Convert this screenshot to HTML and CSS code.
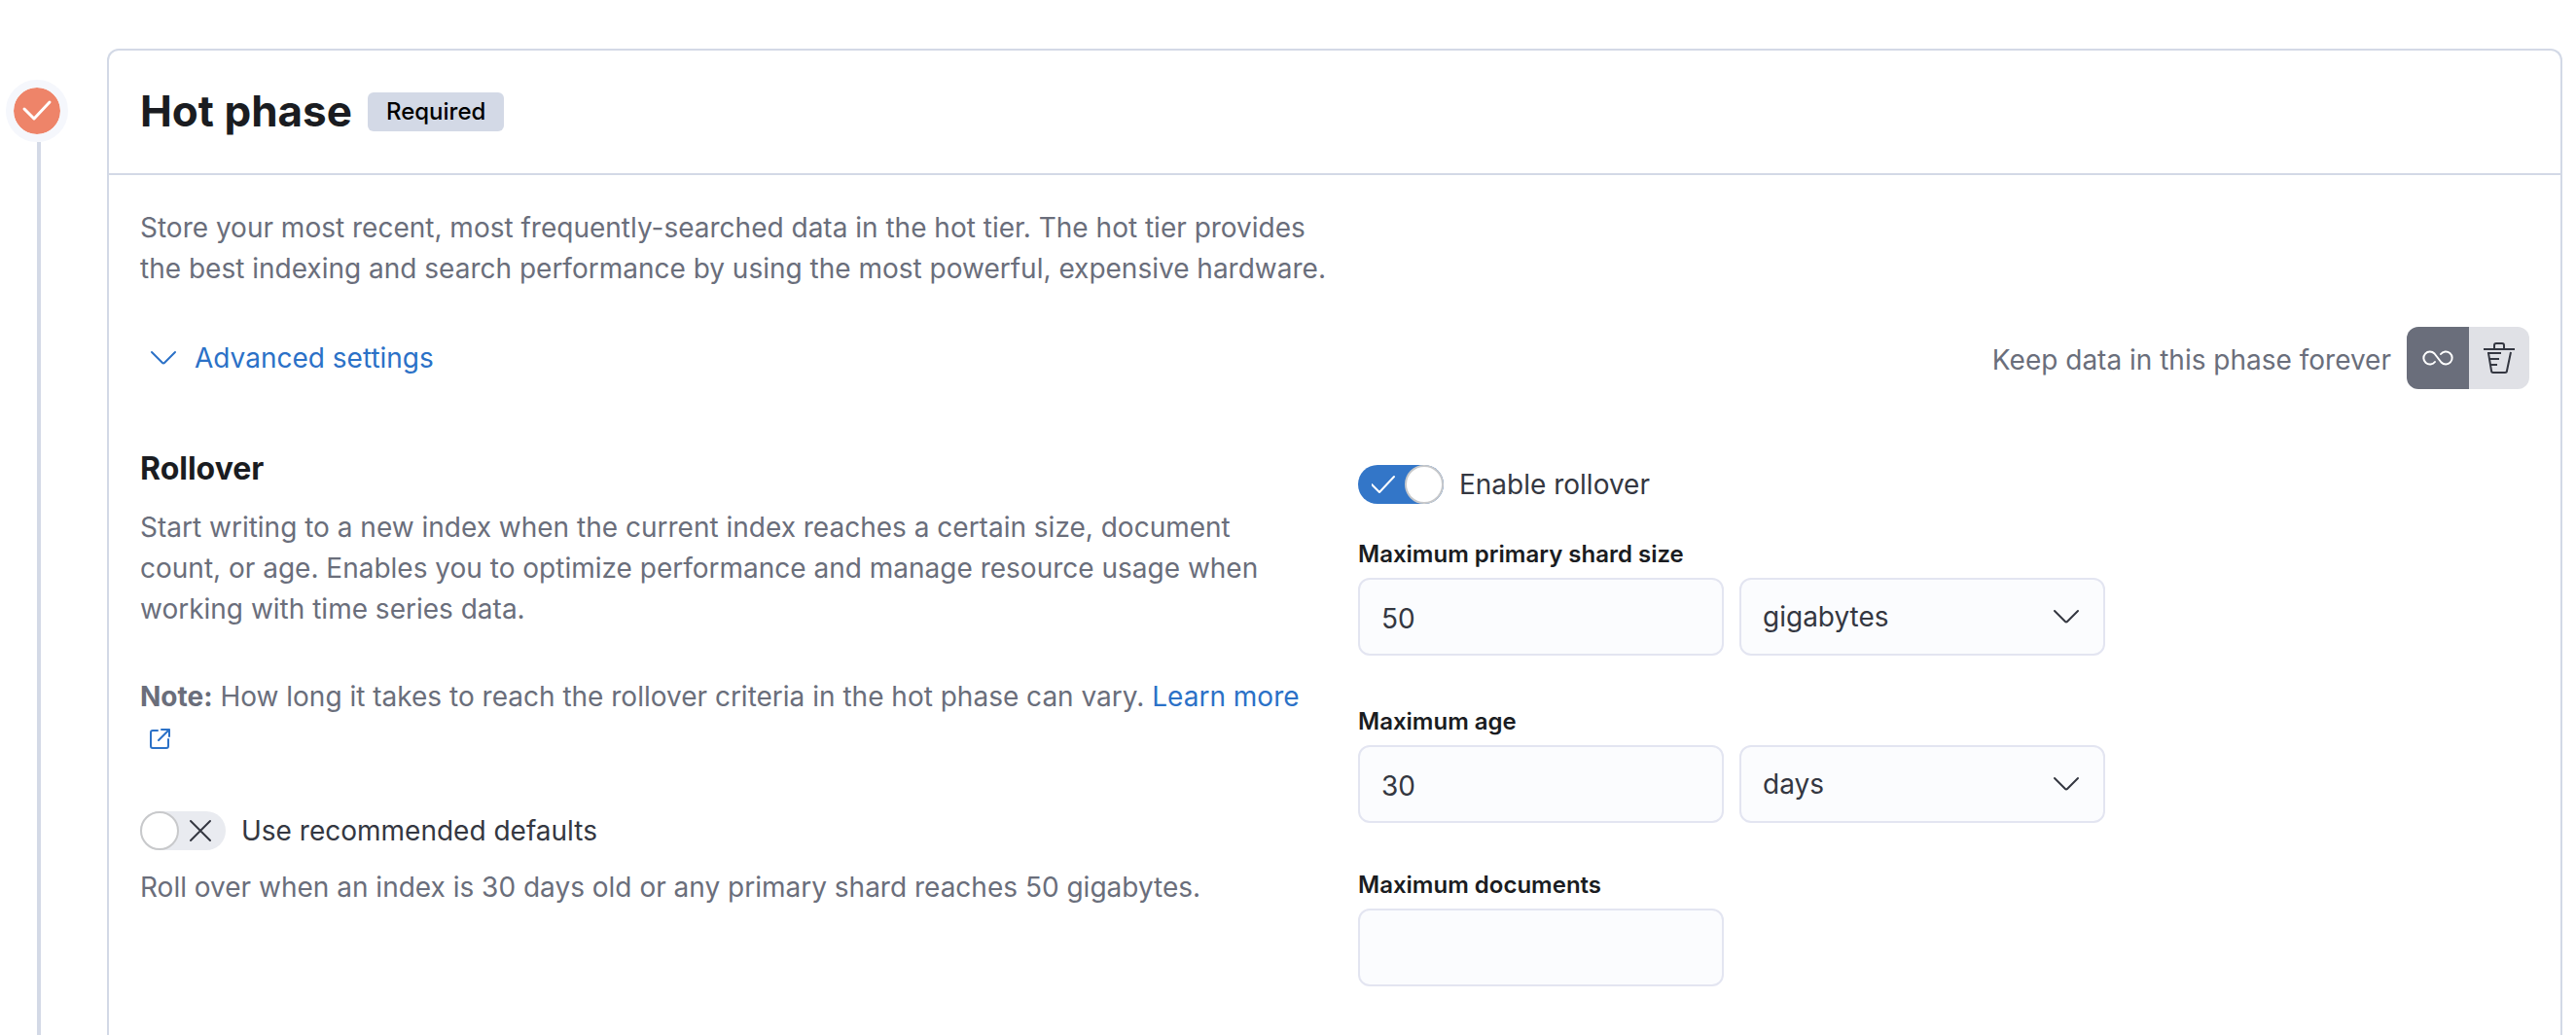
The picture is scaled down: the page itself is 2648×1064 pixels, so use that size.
FILE: index.html
```html
<!DOCTYPE html>
<html lang="en">
<head>
<meta charset="utf-8">
<title>Index lifecycle policy</title>
<link rel="stylesheet" href="styles.css">
</head>
<body>
<main class="phase">
  <div class="timeline">
    <div class="timeline-dot">
      <svg class="icon-lg" viewBox="0 0 32 32" aria-hidden="true"><path d="M3 14l10 10L29 7" stroke-width="3"/></svg>
    </div>
    <div class="timeline-line"></div>
  </div>
  <section class="panel">
    <header class="panel-header">
      <h1 class="title">Hot phase</h1>
      <span class="badge">Required</span>
    </header>
    <div class="panel-body">
      <p class="text intro">Store your most recent, most frequently-searched data in the hot tier. The hot tier provides the best indexing and search performance by using the most powerful, expensive hardware.</p>
      <div class="toolbar">
        <button class="advanced" type="button">
          <svg class="icon-lg" viewBox="0 0 32 32" aria-hidden="true"><path d="M4 10l11 11q1 1 2 0L28 10"/></svg>
          Advanced settings
        </button>
        <div class="retention">
          <span class="text retention-text">Keep data in this phase forever</span>
          <div class="button-group">
            <button class="group-button selected" type="button" aria-label="Keep data forever">
              <svg class="icon-lg" viewBox="0 0 32 32" aria-hidden="true"><path d="M13 20A6.500 6.500 0 1 1 12.500 11.500L19.500 20.500A6.500 6.500 0 1 0 19 12"/></svg>
            </button>
            <button class="group-button" type="button" aria-label="Delete data after this phase">
              <svg class="icon-lg" viewBox="0 0 32 32" aria-hidden="true"><path stroke-linecap="butt" d="M0 7h32M11 7V3q0-2 2-2h6q2 0 2 2v4M4 11h14M5 11l3 18q0 2 2 2h12q2 0 2-2l4-19M6 17h10M7 23h7"/></svg>
            </button>
          </div>
        </div>
      </div>
      <div class="columns">
        <div class="column">
          <h2 class="subtitle">Rollover</h2>
          <p class="text about">Start writing to a new index when the current index reaches a certain size, document count, or age. Enables you to optimize performance and manage resource usage when working with time series data.</p>
          <p class="text note"><strong>Note:</strong> How long it takes to reach the rollover criteria in the hot phase can vary. <a class="link" href="#">Learn more <svg class="icon-sm" viewBox="0 0 24 24" aria-hidden="true"><path d="M10 4H5q-2 0-2 2v14q0 2 2 2h14q2 0 2-2v-7M14 3h8v7M22 3L11 14"/></svg></a></p>
          <label class="switch">
            <input class="switch-input" type="checkbox">
            <svg class="switch-mark off" viewBox="0 0 24 24" aria-hidden="true"><path d="M2 2l20 20M22 2L2 22"/></svg>
            <svg class="switch-mark on" viewBox="0 0 24 24" aria-hidden="true"><path d="M0 12l8 8L23 4"/></svg>
            Use recommended defaults
          </label>
          <p class="text help">Roll over when an index is 30 days old or any primary shard reaches 50 gigabytes.</p>
        </div>
        <div class="column form">
          <label class="switch">
            <input class="switch-input" type="checkbox" checked>
            <svg class="switch-mark off" viewBox="0 0 24 24" aria-hidden="true"><path d="M2 2l20 20M22 2L2 22"/></svg>
            <svg class="switch-mark on" viewBox="0 0 24 24" aria-hidden="true"><path d="M0 12l8 8L23 4"/></svg>
            Enable rollover
          </label>
          <div class="field-row">
            <label class="field-label" for="size">Maximum primary shard size</label>
            <input class="field" id="size" type="text" inputmode="numeric" value="50">
            <div class="select-wrap">
              <select class="field" aria-label="Shard size units"><option>gigabytes</option><option>megabytes</option></select>
              <svg class="icon-lg select-arrow" viewBox="0 0 32 32" aria-hidden="true"><path d="M4 10l11 11q1 1 2 0L28 10"/></svg>
            </div>
          </div>
          <div class="field-row">
            <label class="field-label" for="age">Maximum age</label>
            <input class="field" id="age" type="text" inputmode="numeric" value="30">
            <div class="select-wrap">
              <select class="field" aria-label="Age units"><option>days</option><option>hours</option></select>
              <svg class="icon-lg select-arrow" viewBox="0 0 32 32" aria-hidden="true"><path d="M4 10l11 11q1 1 2 0L28 10"/></svg>
            </div>
          </div>
          <div class="field-row single">
            <label class="field-label" for="docs">Maximum documents</label>
            <input class="field" id="docs" type="text" inputmode="numeric">
          </div>
        </div>
      </div>
    </div>
  </section>
</main>
</body>
</html>
```
FILE: styles.css
```css
*, *::before { box-sizing: border-box; }

body {
  margin: 0;
  background: #fff;
  color: #343741;
  font: 400 28px/42px Inter, "Liberation Sans", sans-serif;
}

h1, h2, p { margin: 0; }

button, input, select {
  font: inherit;
  color: inherit;
}

svg {
  fill: none;
  stroke: currentColor;
  stroke-width: 2;
  stroke-linecap: round;
  stroke-linejoin: round;
  flex: none;
}

.icon-lg { width: 32px; height: 32px; }
.icon-sm { width: 24px; height: 24px; margin-left: 8px; vertical-align: -3px; }

.phase {
  display: flex;
  gap: 40px;
  min-height: 100vh;
  padding: 50px 14px 0 6px;
}

.timeline {
  display: flex;
  flex-direction: column;
  width: 64px;
  padding-top: 32px;
}

.timeline-dot {
  display: flex;
  align-items: center;
  justify-content: center;
  height: 64px;
  border: 8px solid #f5f7fc;
  border-radius: 50%;
  background: #ee8469;
  background-clip: padding-box;
  color: #fff;
}

.timeline-line {
  flex: 1;
  width: 4px;
  margin-left: 32px;
  background: #d3d9e6;
}

.panel {
  flex: 1;
  border: 2px solid #d3d9e6;
  border-bottom: 0;
  border-radius: 12px 12px 0 0;
}

.panel-header {
  display: flex;
  align-items: center;
  gap: 16px;
  height: 128px;
  padding: 0 32px;
  border-bottom: 2px solid #d3d9e6;
}

.title {
  padding-bottom: 2px;
  color: #1a1c21;
  font-size: 44px;
  line-height: 56px;
  font-weight: 700;
}

.badge {
  padding: 0 19px;
  border-radius: 6px;
  background: #d3d9e6;
  color: #000;
  font-size: 24px;
  line-height: 40px;
  font-weight: 500;
}

.panel-body { padding: 33px 32px 48px; }
.text { color: #6a6e7b; }
.intro { max-width: 50%; }

.toolbar {
  display: flex;
  align-items: center;
  justify-content: space-between;
  margin-top: 39px;
}

.advanced {
  display: flex;
  align-items: center;
  gap: 16px;
  padding: 0 8px;
  border: 0;
  background: none;
  color: #2b71c7;
}

.retention {
  display: flex;
  align-items: center;
  gap: 16px;
}

.retention-text { padding-top: 4px; }

.button-group {
  display: flex;
  overflow: hidden;
  border-radius: 12px;
}

.group-button {
  display: flex;
  align-items: center;
  justify-content: center;
  width: 62px;
  height: 64px;
  padding: 0;
  border: 0;
  background: #e0e1e6;
}

.group-button.selected {
  width: 64px;
  background: #6a6e7b;
  color: #fff;
}

.columns {
  display: grid;
  grid-template-columns: 1fr 1fr;
  gap: 48px;
  margin-top: 58px;
}

.subtitle {
  color: #1a1c21;
  font-size: 32px;
  line-height: 48px;
  font-weight: 700;
}

.about { margin-top: 15px; }
.note { margin-top: 48px; }

.link {
  color: #2b71c7;
  text-decoration: none;
}

.switch {
  display: grid;
  grid-template-columns: 88px auto;
  align-items: center;
  justify-content: start;
  column-gap: 16px;
}

.switch-input {
  appearance: none;
  display: flex;
  width: 88px;
  height: 40px;
  margin: 0;
  border-radius: 20px;
  background: #e9ebf0;
}

.switch-input::before {
  content: "";
  width: 40px;
  height: 40px;
  border: 2px solid #c8c9cb;
  border-radius: 50%;
  background: #fff;
}

.switch-input:checked {
  justify-content: flex-end;
  background: #3376c8;
}

.switch-input,
.switch-mark { grid-area: 1 / 1; }
.switch-mark { width: 24px; height: 24px; }
.switch-mark.off { justify-self: end; margin-right: 14px; }
.switch-mark.on { display: none; margin-left: 14px; color: #fff; }
.switch-input:checked ~ .off { display: none; }
.switch-input:checked ~ .on { display: block; }

.column > .switch { margin-top: 54px; }
.column.form > .switch { margin-top: 19px; }
.help { margin-top: 16px; }

.field-row {
  display: grid;
  grid-template-columns: 1fr 1fr;
  gap: 8px 16px;
  max-width: 768px;
  margin-top: 52px;
}

.switch + .field-row { margin-top: 35px; }
.field-row.single { margin-top: 48px; }

.field-label {
  grid-column: 1 / -1;
  color: #1a1c21;
  font-size: 24px;
  line-height: 32px;
  font-weight: 600;
}

.field {
  appearance: none;
  width: 100%;
  height: 80px;
  padding: 0 22px;
  border: 2px solid #e3e5f1;
  border-radius: 12px;
  background: #fbfcfe;
}

input.field { padding-top: 3px; }

.select-wrap { display: grid; align-items: center; }
.select-wrap > * { grid-area: 1 / 1; }

.select-arrow {
  justify-self: end;
  margin-right: 24px;
  pointer-events: none;
}
```
